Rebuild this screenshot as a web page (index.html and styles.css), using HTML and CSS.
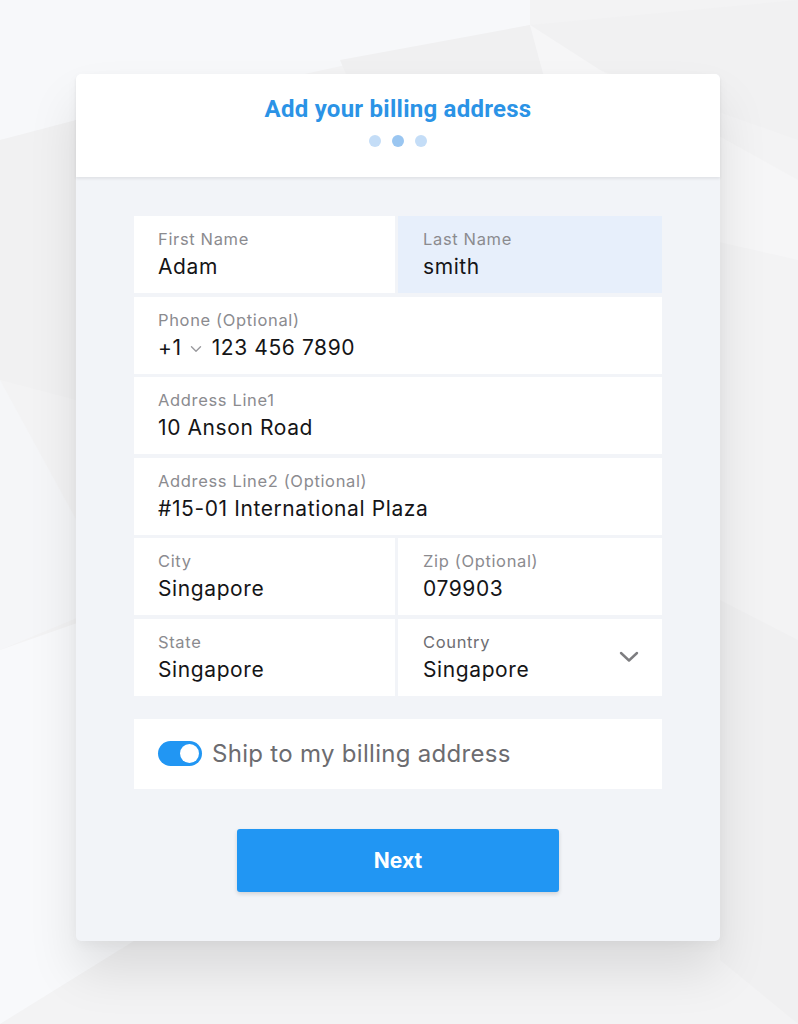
FILE: index.html
```html
<!DOCTYPE html>
<html lang="en">
<head>
<meta charset="utf-8">
<title>Add your billing address</title>
<link rel="stylesheet" href="styles.css">
</head>
<body>
<div class="page">
  <svg class="bg" viewBox="0 0 798 1024" preserveAspectRatio="none" aria-hidden="true">
    <rect width="798" height="1024" fill="#f3f3f4"/>
    <polygon points="0,0 530,0 530,25 0,140" fill="#f7f8fa"/>
    <polygon points="530,25 580,210 420,250 340,60" fill="#f0f0f1"/>
    <polygon points="530,25 798,0 798,140 600,70" fill="#f1f1f2"/>
    <polygon points="530,25 600,70 798,180 798,260 580,210" fill="#f6f6f7"/>
    <polygon points="0,380 0,650 120,600" fill="#f5f6f8"/>
    <polygon points="0,650 200,580 200,900 0,1024" fill="#f8f9fb"/>
    <polygon points="0,140 76,120 76,400 0,380" fill="#f1f1f2"/>
    <polygon points="720,600 798,640 798,1024 720,960" fill="#f0f0f1"/>
  </svg>

  <main class="card">
    <header class="card-head">
      <h1 class="title">Add your billing address</h1>
      <div class="dots">
        <span class="dot"></span>
        <span class="dot dot-active"></span>
        <span class="dot"></span>
      </div>
    </header>

    <div class="card-body">
      <div class="fields">
        <div class="field">
          <div class="label">First Name</div>
          <div class="value">Adam</div>
        </div>
        <div class="field col-right field-focus">
          <div class="label">Last Name</div>
          <div class="value">smith</div>
        </div>
        <div class="field field-wide">
          <div class="label">Phone (Optional)</div>
          <div class="value phone">
            <span>+1</span>
            <svg class="mini-chev" viewBox="0 0 12 8" aria-hidden="true"><path d="M1.5 1.8 L6 6.2 L10.5 1.8" fill="none" stroke="#9a9a9e" stroke-width="1.4" stroke-linecap="round" stroke-linejoin="round"/></svg>
            <span>123 456 7890</span>
          </div>
        </div>
        <div class="field field-wide">
          <div class="label">Address Line1</div>
          <div class="value">10 Anson Road</div>
        </div>
        <div class="field field-wide">
          <div class="label">Address Line2 (Optional)</div>
          <div class="value">#15-01 International Plaza</div>
        </div>
        <div class="field">
          <div class="label">City</div>
          <div class="value">Singapore</div>
        </div>
        <div class="field col-right">
          <div class="label">Zip (Optional)</div>
          <div class="value">079903</div>
        </div>
        <div class="field">
          <div class="label">State</div>
          <div class="value">Singapore</div>
        </div>
        <div class="field col-right field-select">
          <div>
            <div class="label label-dark">Country</div>
            <div class="value">Singapore</div>
          </div>
          <svg class="chev" viewBox="0 0 20 12" aria-hidden="true"><path d="M2 2 L10 9.5 L18 2" fill="none" stroke="#7d7d80" stroke-width="2.4" stroke-linecap="round" stroke-linejoin="round"/></svg>
        </div>
      </div>

      <div class="ship">
        <span class="toggle"><span class="knob"></span></span>
        <span class="ship-text">Ship to my billing address</span>
      </div>

      <div class="actions">
        <button class="btn" type="button">Next</button>
      </div>
    </div>
  </main>
</div>
</body>
</html>
```

FILE: styles.css
```css
* { box-sizing: border-box; }

html, body {
  margin: 0;
  padding: 0;
}

body {
  font-family: "Inter", "Roboto", "Liberation Sans", sans-serif;
  background: #f3f3f4;
}

.page {
  position: relative;
  width: 798px;
  height: 1024px;
  overflow: hidden;
  padding-top: 74px;
  padding-left: 76px;
}

.bg {
  position: absolute;
  left: 0;
  top: 0;
  width: 798px;
  height: 1024px;
  z-index: 0;
}

.card {
  position: relative;
  z-index: 1;
  width: 644px;
  background: #f2f4f8;
  border-radius: 5px;
  box-shadow: 0 30px 50px rgba(0, 0, 0, 0.10), 0 4px 12px rgba(0, 0, 0, 0.04);
}

.card-head {
  position: relative;
  background: #ffffff;
  border-radius: 5px 5px 0 0;
  height: 103px;
  padding-top: 21px;
  text-align: center;
  box-shadow: 0 2px 3px rgba(0, 0, 0, 0.07);
}

.title {
  margin: 0;
  font-family: "Roboto", "Inter", sans-serif;
  font-weight: 700;
  font-size: 24px;
  line-height: 28px;
  color: #2b93e6;
  letter-spacing: 0.25px;
}

.dots {
  display: flex;
  justify-content: center;
  gap: 11px;
  margin-top: 12px;
}

.dot {
  width: 12px;
  height: 12px;
  border-radius: 50%;
  background: #c4ddf7;
}

.dot-active {
  background: #9ac6f1;
}

.card-body {
  padding: 39px 58px 49px;
}

.fields {
  display: grid;
  grid-template-columns: 261px 264px;
  grid-auto-rows: 77px;
  column-gap: 3px;
  row-gap: 3.6px;
}

.field {
  background: #ffffff;
  padding: 13px 24px 0;
}

.col-right {
  padding-left: 25px;
}

.field-focus {
  background: #e7effb;
}

.field-wide {
  grid-column: 1 / -1;
}

.label {
  font-size: 16.5px;
  line-height: 21px;
  color: #8b8b8f;
  letter-spacing: 0.65px;
}

.label-dark {
  color: #6e6e72;
}

.value {
  margin-top: 4px;
  font-size: 21px;
  line-height: 26px;
  color: #151517;
  letter-spacing: 0.6px;
}

.phone {
  display: flex;
  align-items: center;
}

.mini-chev {
  width: 12px;
  height: 8px;
  margin: 3px 10px 0 8px;
}

.field-select {
  display: flex;
  justify-content: space-between;
  align-items: flex-start;
  padding-right: 23px;
}

.chev {
  align-self: center;
  width: 20px;
  height: 12px;
  margin-top: -13px;
}

.ship {
  margin-top: 23px;
  height: 70px;
  background: #ffffff;
  display: flex;
  align-items: center;
  padding-left: 24px;
}

.toggle {
  position: relative;
  width: 44px;
  height: 25px;
  border-radius: 13px;
  background: #2196f3;
  flex: none;
}

.knob {
  position: absolute;
  right: 3px;
  top: 3px;
  width: 19px;
  height: 19px;
  border-radius: 50%;
  background: #ffffff;
}

.ship-text {
  margin-left: 10px;
  font-size: 24px;
  line-height: 30px;
  color: #6c6c70;
  letter-spacing: 0.3px;
}

.actions {
  display: flex;
  justify-content: center;
  margin-top: 40px;
}

.btn {
  width: 322px;
  height: 63px;
  border: none;
  border-radius: 3px;
  background: #2196f3;
  color: #ffffff;
  font-family: "Inter", "Roboto", sans-serif;
  font-weight: 700;
  font-size: 21px;
  box-shadow: 0 2px 4px rgba(0, 0, 0, 0.14);
}
```
